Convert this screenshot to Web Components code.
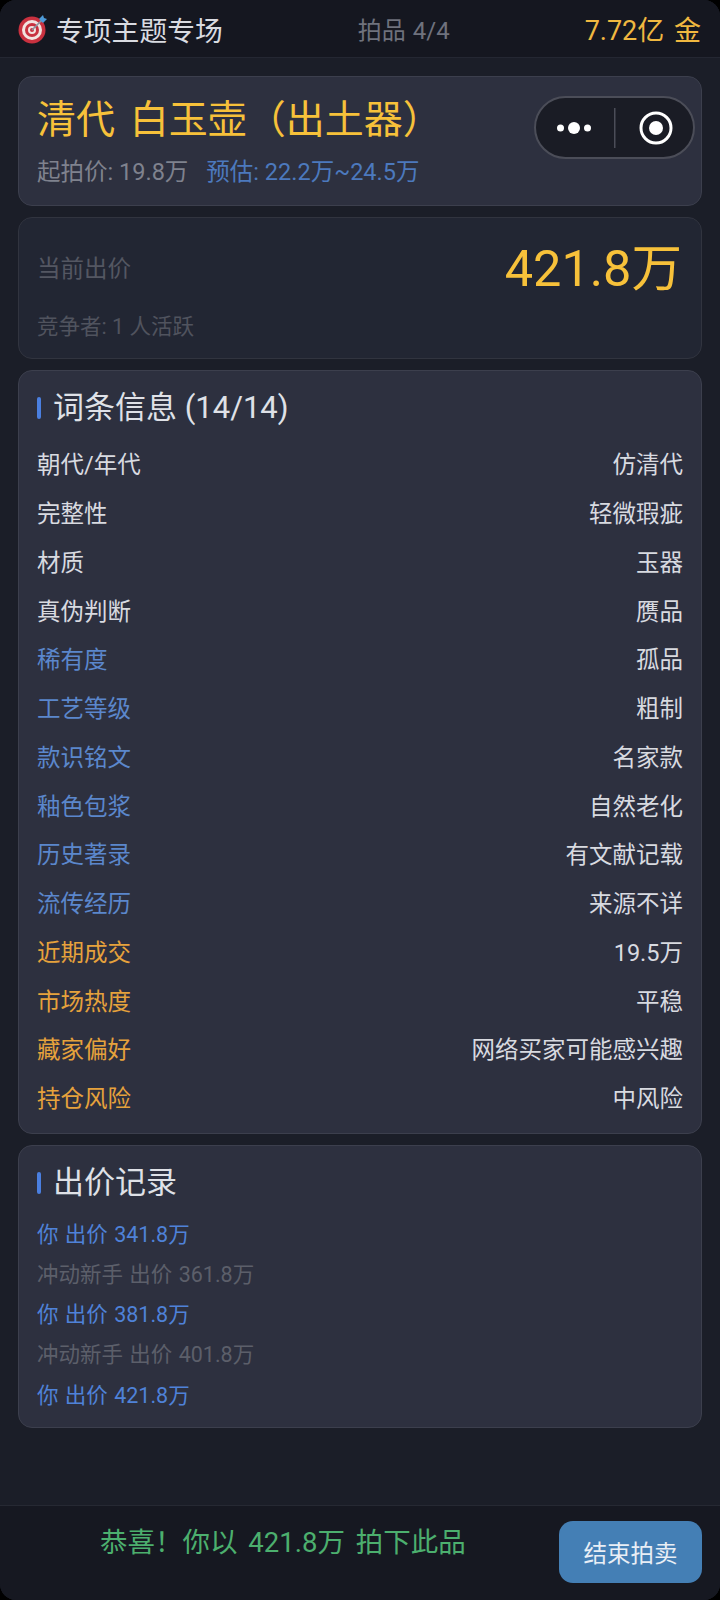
<!DOCTYPE html>
<html lang="zh">
<head>
<meta charset="utf-8">
<title>拍卖</title>
<style>
    html, body { margin: 0; padding: 0; background: #000; }
    body { font-family: Roboto, "Noto Sans CJK SC", sans-serif; }
</style>
</head>
<body>
<auction-screen>
    <top-bar slot="top" title-text="专项主题专场" progress="拍品 4/4" money="7.72亿 金"></top-bar>

    <lot-card slot="main" name="清代 白玉壶（出土器）" start="起拍价: 19.8万" estimate="预估: 22.2万~24.5万"></lot-card>
    <bid-card slot="main" price="421.8万" rivals="竞争者: 1 人活跃"></bid-card>

    <section-card slot="main" heading="词条信息 (14/14)" kind="stats">
        <stat-row label="朝代/年代" value="仿清代"></stat-row>
        <stat-row label="完整性" value="轻微瑕疵"></stat-row>
        <stat-row label="材质" value="玉器"></stat-row>
        <stat-row label="真伪判断" value="赝品"></stat-row>
        <stat-row tone="blue" label="稀有度" value="孤品"></stat-row>
        <stat-row tone="blue" label="工艺等级" value="粗制"></stat-row>
        <stat-row tone="blue" label="款识铭文" value="名家款"></stat-row>
        <stat-row tone="blue" label="釉色包浆" value="自然老化"></stat-row>
        <stat-row tone="blue" label="历史著录" value="有文献记载"></stat-row>
        <stat-row tone="blue" label="流传经历" value="来源不详"></stat-row>
        <stat-row tone="orange" label="近期成交" value="19.5万"></stat-row>
        <stat-row tone="orange" label="市场热度" value="平稳"></stat-row>
        <stat-row tone="orange" label="藏家偏好" value="网络买家可能感兴趣"></stat-row>
        <stat-row tone="orange" label="持仓风险" value="中风险"></stat-row>
    </section-card>

    <section-card slot="main" heading="出价记录" kind="log">
        <log-line mine>你 出价 341.8万</log-line>
        <log-line>冲动新手 出价 361.8万</log-line>
        <log-line mine>你 出价 381.8万</log-line>
        <log-line>冲动新手 出价 401.8万</log-line>
        <log-line mine>你 出价 421.8万</log-line>
    </section-card>

    <bottom-bar slot="bottom" message="恭喜！你以 421.8万 拍下此品" action="结束拍卖"></bottom-bar>
    <capsule-menu slot="over"></capsule-menu>
</auction-screen>

<script>
class AuctionScreen extends HTMLElement {
    constructor() {
        super();
        this.attachShadow({ mode: 'open' }).innerHTML = `
            <style>
                :host {
                    display: flex;
                    flex-direction: column;
                    position: relative;
                    width: 720px;
                    height: 1600px;
                    overflow: hidden;
                    background: #1b1e28;
                    border-radius: 16px;
                }
                main {
                    flex: 1;
                    display: flex;
                    flex-direction: column;
                    gap: 11px;
                    padding: 18px 18px 0;
                }
            </style>
            <slot name="top"></slot>
            <main><slot name="main"></slot></main>
            <slot name="bottom"></slot>
            <slot name="over"></slot>
        `;
    }
}

class TopBar extends HTMLElement {
    constructor() {
        super();
        this.attachShadow({ mode: 'open' });
    }

    connectedCallback() {
        this.shadowRoot.innerHTML = `
            <style>
                :host {
                    display: flex;
                    justify-content: space-between;
                    align-items: center;
                    height: 58px;
                    padding: 0 19px 0 18px;
                    background: #151720;
                    border-bottom: 1px solid #242732;
                    box-sizing: border-box;
                }
                .left { display: flex; align-items: center; gap: 8px; font-size: 27.8px; color: #d9dbe1; }
                .mid { font-size: 24px; word-spacing: 1px; color: #6f727d; }
                .right { font-size: 27px; word-spacing: 3px; color: #f0b840; }
                svg { display: block; width: 30px; height: 30px; }
            </style>
            <div class="left">
                <svg viewBox="0 0 30 30">
                    <circle cx="14" cy="16" r="13.5" fill="#c9313f"/>
                    <circle cx="14" cy="16" r="10" fill="#f2e3df"/>
                    <circle cx="14" cy="16" r="7" fill="#c9313f"/>
                    <circle cx="14" cy="16" r="4" fill="#f2e3df"/>
                    <circle cx="14" cy="16" r="2" fill="#c9313f"/>
                    <path d="M14 16L24 6" stroke="#8a94a0" stroke-width="1.6"/>
                    <path d="M21 5l4-4 1 3 3 1-4 4z" fill="#4e9bd8"/>
                </svg>
                <span>${this.getAttribute('title-text')}</span>
            </div>
            <div class="mid">${this.getAttribute('progress')}</div>
            <div class="right">${this.getAttribute('money')}</div>
        `;
    }
}

class LotCard extends HTMLElement {
    constructor() {
        super();
        this.attachShadow({ mode: 'open' });
    }

    connectedCallback() {
        this.shadowRoot.innerHTML = `
            <style>
                :host {
                    display: block;
                    height: 130px;
                    box-sizing: border-box;
                    padding: 19px 18px 0;
                    background: #2d303f;
                    border: 1px solid #3c3f4d;
                    border-radius: 14px;
                }
                .name { font-size: 39px; word-spacing: 5px; line-height: 48px; color: #f7c13a; }
                .sub { display: flex; gap: 18px; margin-top: 13px; font-size: 23.5px; line-height: 30px; color: #7f828e; }
                .est { color: #4c79bd; }
            </style>
            <div class="name">${this.getAttribute('name')}</div>
            <div class="sub">
                <span>${this.getAttribute('start')}</span>
                <span class="est">${this.getAttribute('estimate')}</span>
            </div>
        `;
    }
}

class BidCard extends HTMLElement {
    constructor() {
        super();
        this.attachShadow({ mode: 'open' });
    }

    connectedCallback() {
        this.shadowRoot.innerHTML = `
            <style>
                :host {
                    display: block;
                    height: 142px;
                    box-sizing: border-box;
                    padding: 18px 19px 0 18px;
                    background: #222633;
                    border: 1px solid #31343f;
                    border-radius: 14px;
                }
                .row { display: flex; justify-content: space-between; align-items: center; height: 62px; }
                .label { font-size: 23.5px; color: #545762; }
                .price { margin-bottom: 7px; font-size: 50.5px; color: #f7c13a; }
                .rivals { margin-top: 14px; font-size: 21.5px; line-height: 30px; color: #50535e; }
            </style>
            <div class="row">
                <span class="label">当前出价</span>
                <span class="price">${this.getAttribute('price')}</span>
            </div>
            <div class="rivals">${this.getAttribute('rivals')}</div>
        `;
    }
}

class SectionCard extends HTMLElement {
    constructor() {
        super();
        this.attachShadow({ mode: 'open' });
    }

    connectedCallback() {
        const isLog = this.getAttribute('kind') === 'log';
        this.shadowRoot.innerHTML = `
            <style>
                :host {
                    display: block;
                    box-sizing: border-box;
                    padding: 17px 18px 11px;
                    background: #2d303f;
                    border: 1px solid #3c3f4d;
                    border-radius: 14px;
                }
                h2 {
                    display: flex;
                    align-items: center;
                    gap: 12px;
                    margin: 0 0 ${isLog ? 12 : 11}px;
                    font-size: 31px;
                    font-weight: 400;
                    line-height: 40px;
                    color: #dfe1e7;
                }
                h2::before {
                    content: "";
                    width: 4px;
                    height: 22px;
                    border-radius: 2px;
                    background: #4a7fe0;
                }
            </style>
            <h2>${this.getAttribute('heading')}</h2>
            <slot></slot>
        `;
    }
}

class StatRow extends HTMLElement {
    constructor() {
        super();
        this.attachShadow({ mode: 'open' });
    }

    connectedCallback() {
        const tones = { blue: '#5b87cc', orange: '#e6a23c' };
        const tone = tones[this.getAttribute('tone')] || '#d8dae0';
        this.shadowRoot.innerHTML = `
            <style>
                :host {
                    display: flex;
                    justify-content: space-between;
                    align-items: center;
                    height: 48.75px;
                    font-size: 23.5px;
                    color: #d8dae0;
                }
                .label { color: ${tone}; }
            </style>
            <span class="label">${this.getAttribute('label')}</span>
            <span>${this.getAttribute('value')}</span>
        `;
    }
}

class LogLine extends HTMLElement {
    constructor() {
        super();
        this.attachShadow({ mode: 'open' }).innerHTML = `
            <style>
                :host {
                    display: block;
                    font-size: 21.5px;
                    word-spacing: 1px;
                    line-height: 40.25px;
                    color: #5c5f6a;
                }
                :host([mine]) { color: #4f82d8; }
            </style>
            <slot></slot>
        `;
    }
}

class BottomBar extends HTMLElement {
    constructor() {
        super();
        this.attachShadow({ mode: 'open' });
    }

    connectedCallback() {
        this.shadowRoot.innerHTML = `
            <style>
                :host {
                    display: flex;
                    align-items: center;
                    height: 95px;
                    box-sizing: border-box;
                    padding: 0 18px 0 100px;
                    background: #161821;
                    border-top: 1px solid #262933;
                }
                .msg { flex: 1; margin-bottom: 27px; font-size: 27.5px; word-spacing: 4px; color: #4caf6e; }
                button {
                    width: 143px;
                    height: 62px;
                    margin-bottom: 2px;
                    padding: 0;
                    border: 0;
                    border-radius: 14px;
                    background: #447fb5;
                    font: inherit;
                    font-size: 23.5px;
                    color: #e8eef5;
                }
            </style>
            <span class="msg">${this.getAttribute('message')}</span>
            <button>${this.getAttribute('action')}</button>
        `;
    }
}

// wechat style capsule sits over the lot card
class CapsuleMenu extends HTMLElement {
    constructor() {
        super();
        this.attachShadow({ mode: 'open' }).innerHTML = `
            <style>
                :host {
                    position: absolute;
                    top: 96px;
                    left: 534px;
                    width: 161px;
                    height: 63px;
                    box-sizing: border-box;
                    background: #1a1c25;
                    border: 2px solid #4b4d58;
                    border-radius: 32px;
                }
                svg { display: block; position: absolute; top: -2px; left: -2px; }
            </style>
            <svg width="161" height="63" viewBox="0 0 161 63">
                <circle cx="26.500" cy="32" r="3.500" fill="#fff"/>
                <circle cx="40" cy="32" r="6" fill="#fff"/>
                <circle cx="53.500" cy="32" r="3.500" fill="#fff"/>
                <rect x="80" y="12" width="1.500" height="40" fill="#4b4d58"/>
                <circle cx="122" cy="32" r="15" fill="none" stroke="#fff" stroke-width="3"/>
                <circle cx="122" cy="32" r="7" fill="#fff"/>
            </svg>
        `;
    }
}

customElements.define('auction-screen', AuctionScreen);
customElements.define('top-bar', TopBar);
customElements.define('lot-card', LotCard);
customElements.define('bid-card', BidCard);
customElements.define('section-card', SectionCard);
customElements.define('stat-row', StatRow);
customElements.define('log-line', LogLine);
customElements.define('bottom-bar', BottomBar);
customElements.define('capsule-menu', CapsuleMenu);
</script>
</body>
</html>
